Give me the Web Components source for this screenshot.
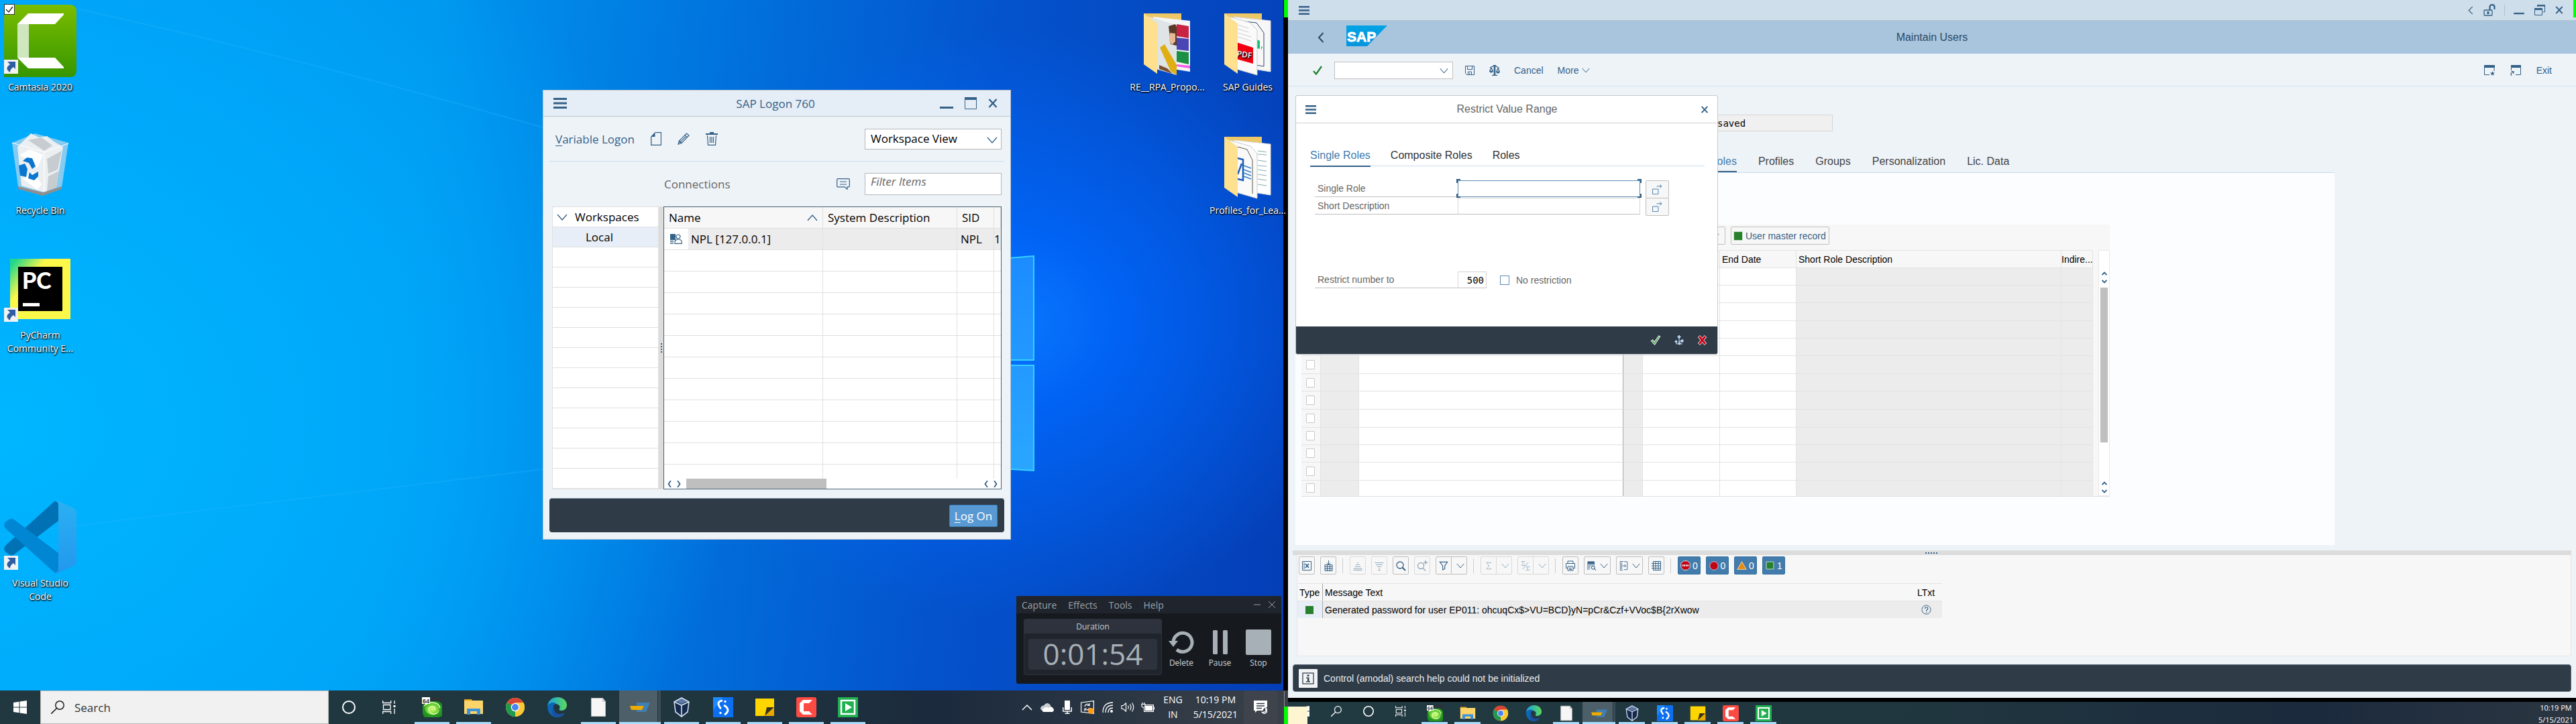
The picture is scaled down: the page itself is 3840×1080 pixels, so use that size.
<!DOCTYPE html>
<html lang="en">
<head>
<meta charset="utf-8">
<title>Desktop</title>
<style>
html,body{margin:0;height:100%}
body{display:flex;background:#000;overflow:hidden;font-family:"Open Sans","Noto Sans",sans-serif}
body>*{flex:1 1 0;min-width:0}
</style>
</head>
<body>
<left-monitor></left-monitor>
<right-monitor></right-monitor>
<script>
const BASE = `
*{box-sizing:border-box}
button,input,select{font:inherit;color:inherit;margin:0;padding:0;border:0;background:none;border-radius:0;outline:0;appearance:none}
button{display:inline-flex;align-items:center;justify-content:center;white-space:nowrap}
ul{list-style:none;margin:0;padding:0}
table{border-collapse:separate;border-spacing:0;table-layout:fixed}
th,td{padding:0;font-weight:400;text-align:left;white-space:nowrap;overflow:hidden}
h1,h2,p{margin:0;font-size:inherit;font-weight:400}
`;
const define = (name, css, html) => customElements.define(name, class extends HTMLElement {
  connectedCallback() {
    if (this.shadowRoot) return;
    this.attachShadow({mode: 'open'}).innerHTML = `<style>${BASE}${css}</style>` + (typeof html === 'function' ? html(this) : html);
  }
});

/* Icon set: [viewBox, markup]. Line icons take the current colour. */
const L = 'fill="none" stroke="currentColor"';
const ICONS = {
  menu: ['0 0 20 16', '<path fill="currentColor" d="M0 0h20v3H0zM0 6.500h20v3H0zM0 13h20v3H0z"/>'],
  min: ['0 0 20 18', '<path fill="currentColor" d="M0 14h20v3H0z"/>'],
  max: ['0 0 20 20', `<path ${L} d="M1.500 1.500h17v17h-17z"/><path fill="currentColor" d="M1 1h18v4H1z"/>`],
  close: ['0 0 14 14', `<path ${L} stroke-width="2.400" d="M1.500 1l11 12M12.500 1l-11 12"/>`],
  restore: ['0 0 16 16', `<path ${L} d="M.5 5.500h11v10H.5zM4.500 3V.8h11v10H13"/><path fill="currentColor" d="M0 5h12v3H0zM4 0h12v2.500H4z"/>`],
  down: ['0 0 16 10', `<path ${L} stroke-width="1.300" d="M1 1l7 8 7-8"/>`],
  up: ['0 0 16 10', `<path ${L} stroke-width="1.300" d="M1 9l7-8 7 8"/>`],
  left: ['0 0 8 14', `<path ${L} stroke-width="1.300" d="M7 1L1 7l6 6"/>`],
  back: ['0 0 10 16', `<path ${L} stroke-width="2" d="M8.500 1L2 8l6.500 7"/>`],
  sleft: ['0 0 6 10', `<path ${L} stroke-width="1.800" d="M5 0L1.500 5 5 10"/>`],
  sright: ['0 0 6 10', `<path ${L} stroke-width="1.800" d="M1 0l3.500 5L1 10"/>`],
  sup: ['0 0 8 6', `<path ${L} stroke-width="1.800" d="M.5 5L4 1.500 7.500 5"/>`],
  sdown: ['0 0 8 6', `<path ${L} stroke-width="1.800" d="M.5 1L4 4.500 7.500 1"/>`],
  doc: ['0 0 16 20', `<path ${L} stroke-width="1.300" d="M6.500.7h9v18.600H.7V7"/><path fill="currentColor" d="M0 7L6.500 0v7z"/>`],
  pencil: ['0 0 18 18', `<path ${L} stroke-width="1.200" d="M1 17l1.500-5L13.500 1l3.500 3L6 15.500zM11 3.500l3.500 3.500M3 15L12 6M2.500 12L6 15.500"/>`],
  trash: ['0 0 18 20', `<path ${L} stroke-width="1.200" d="M2.500 5l1 14.300h11l1-14.300M6.500 7v9M9 7v9M11.500 7v9"/><path fill="currentColor" d="M0 2h18v2H0zM6 0h6v2H6z"/>`],
  note: ['0 0 20 17', `<path ${L} stroke-width="1.200" d="M2 .7h16q1.300 0 1.300 1.300v9.500q0 1.300-1.300 1.300h-2v3.500l-4-3.500H2Q.7 12.800.7 11.500V2Q.7.700 2 .7zM5 5h10M5 9h10"/>`],
  conn: ['0 0 18 15', `<path fill="currentColor" d="M0 0h8v9H0zM0 10h5v1.500H0zM0 13h5v1.500H0z"/><circle ${L} stroke-width="1.200" cx="12" cy="4" r="3" /><path ${L} stroke-width="1.200" d="M7 14.300V11q1.500-3 5-3 4 0 5.300 3v3.300z"/>`],
  check: ['0 0 14 14', '<path fill="none" stroke="#1f8230" stroke-width="2.300" d="M1 8l4 4.500L13 1"/>'],
  save: ['0 0 14 14', `<path ${L} d="M.5.5h13v13h-11l-2-2zM3.500.500v5h7v-5M4.500 13.500v-4.500h5v4.500M6.500 10.500v2"/>`],
  scale: ['0 0 16 16', `<path ${L} stroke-width="1.300" d="M7.300 1v14M8.700 1v14M4 15.300h8M1 4l6-3M9 1l6 4M3 4L.7 9M3 4l2.300 5M13 5l-2.300 5M13 5l2.300 5"/><path fill="currentColor" d="M0 8.500h6q-.5 3-3 3T0 8.500zM10 9.500h6q-.5 3-3 3t-3-3zM6 0h4v2H6z"/>`],
  lock: ['0 0 18 18', `<path ${L} stroke-width="1.300" d="M2 9h10q1 0 1 1v6q0 1-1 1H2q-1 0-1-1v-6q0-1 1-1z"/><path ${L} stroke-width="2.200" d="M9.500 9V4.500q0-3.300 3.500-3.300t3.500 3.300V8"/><path fill="currentColor" d="M5.500 11h3v4h-3z"/>`],
  winstar: ['0 0 16 16', `<path ${L} d="M.5 1v13.500H8M15 1v8"/><path fill="currentColor" d="M0 0h16v4H0zM12.500 9l1 2.500H16l-2 1.700.8 2.600-2.300-1.500-2.300 1.500.8-2.600-2-1.700h2.500z"/>`],
  winlink: ['0 0 16 16', `<path ${L} d="M15.500 1v13.500H8M1.500 4v4"/><path fill="currentColor" d="M1 0h15v4H1z"/><path ${L} stroke-width="1.200" d="M2 16q-3-4 3-6M1.500 9.500L5.200 9.800 4.500 13"/>`],
  multi: ['0 0 16 16', `<path ${L} d="M.5 7.500h9v8h-9zM7 3h8M12 .5L15 3l-3 2.500"/>`],
  ok: ['0 0 16 16', '<path fill="#2a8c35" stroke="#e4f2e4" stroke-width="1.300" d="M1 9l2.500-1.500L6 11l7-10 2 1-8.500 13z"/>'],
  tree: ['0 0 14 15', '<path stroke="#cfe2f5" fill="none" d="M7 4v9M3 8v5h9M7 9h4"/><g fill="#a9d2f6" stroke="#eaf4fd" stroke-width=".5"><path d="M7 0l2.500 2.500L7 5 4.500 2.500zM11.500 6L14 8.500 11.500 11 9 8.500zM2.500 7.500l2 2-2 2-2-2zM7.500 10l2 2-2 2.500-2-2.500z"/></g>'],
  cancel: ['0 0 15 15', '<path fill="none" stroke="#f5dede" stroke-width="4.500" d="M2.500 1.500l10 12M12.500 1.500l-10 12"/><path fill="none" stroke="#c80014" stroke-width="2.800" d="M3 2l9 11M12 2L3 13"/>'],
  xl: ['0 0 16 16', `<path ${L} d="M1.500 1.500h13v13h-13zM4 3v10"/><path ${L} stroke-width="1.600" d="M6 5l5 6M11 5l-5 6"/>`],
  gridin: ['0 0 16 16', `<path ${L} d="M3 6.500h11v9H3zM3 9.500h11M3 12.500h11M6.500 6v9.500M10.500 6v9.500M8.500 0v6M6 3.500L8.500 6 11 3.500"/>`],
  asc: ['0 0 16 16', `<path ${L} d="M7 3.500h2M5 6.500h6M3.500 9.500h9M1.500 12.500h13M1.500 14.500h13"/>`],
  desc: ['0 0 16 16', `<path ${L} d="M1.500 3.500h13M3 6.500h10M5 9.500h6M7 12.500h2M6 14.500h4"/>`],
  find: ['0 0 16 16', `<circle ${L} stroke-width="1.300" cx="7" cy="7" r="5"/><path ${L} stroke-width="2" d="M10.500 10.500L15 15"/>`],
  findp: ['0 0 16 16', `<circle ${L} stroke-width="1.300" cx="6" cy="8" r="4.500"/><path ${L} stroke-width="1.300" d="M9 11l4 4.500M13 0v6M10 3h6"/>`],
  filter: ['0 0 16 16', `<path ${L} stroke-width="1.300" d="M1.500 1.500h13L10 8v5l-3.500 2V8z"/>`],
  sum: ['0 0 16 16', `<path ${L} d="M12 4V2.500H4.500L9 8l-4.500 5.500H12V12"/>`],
  sub: ['0 0 16 16', `<path ${L} d="M7 2V.5H1.500L4.500 4l-3 3.500H7V6M14.500 11V9.500H9.500l2.500 3-2.500 3h5V14M13 2L3 14"/>`],
  print: ['0 0 16 16', `<path ${L} d="M4 4V1h8v3M4 11.500H1.500V4.500h13v7H12M4 9h8v6H4zM6 11.500h4M6 13.500h4"/>`],
  view: ['0 0 16 16', `<path ${L} d="M1 15V1h11v6M2 6.500h9M2 8.500h4M2 11h3M2 13.500h3"/><path fill="currentColor" d="M1 1h11v4H1z"/><circle ${L} stroke-width="1.200" cx="10" cy="11" r="2.700"/><path ${L} stroke-width="1.300" d="M12 13l3 2.500"/>`],
  exp: ['0 0 16 16', `<path ${L} d="M7 .5H1.500v15H6M4 2v12M8 1h5.500v13.500H8M5 8h6M8.500 5.500L11 8l-2.500 2.500"/>`],
  grid: ['0 0 16 16', `<path ${L} d="M3.500 1.500h11v13h-11zM1 4.500h14M1 8h14M1 11.500h14M7 1v14M11 1v14"/>`],
  stop: ['0 0 18 18', '<path fill="#c00418" stroke="#fff" d="M5.500 1h7L17 5.500v7L12.500 17h-7L1 12.500v-7z"/><path stroke="#fff" stroke-width="3" stroke-dasharray="2 1" d="M3.500 9h11.500"/>'],
  ball: ['0 0 18 18', '<circle cx="9" cy="9" r="8" fill="#c00418" stroke="#fff" stroke-width=".8"/>'],
  warn: ['0 0 18 18', '<path fill="#e88a10" stroke="#fbe3c0" d="M9 2l8 14H1z"/>'],
  good: ['0 0 18 18', '<path fill="#27802c" stroke="#d9ecd9" d="M2.500 2.500h13v13h-13z"/>'],
  info: ['0 0 20 20', '<path fill="none" stroke="#4c5b68" stroke-width="1.500" d="M2 2h16v16H2z"/><path fill="#36444f" d="M8.500 4.500h3v2.500h-3zM7 8.500h4.500V14H13v1.500H7V14h2v-4H7z"/>'],
  help: ['0 0 16 16', `<circle ${L} cx="8" cy="8" r="7"/><path ${L} stroke-width="1.300" d="M5.800 6.500q0-2.500 2.300-2.500t2.300 2-2.200 2.800V10M8.200 11.500v1.300"/>`],
  win: ['0 0 20 20', '<path fill="#fff" d="M0 3l8.500-1.200v7.700H0zM9.500 1.600L20 0v9.500H9.500zM0 10.500h8.500v7.700L0 17zM9.500 10.500H20V20L9.500 18.400z"/>'],
  search: ['0 0 20 20', `<circle ${L} stroke-width="1.500" cx="13" cy="7" r="6.200"/><path ${L} stroke-width="1.600" d="M8.500 11.500L0 20"/>`],
  ring: ['0 0 20 20', '<circle fill="none" stroke="#fff" stroke-width="2" cx="10" cy="10" r="9"/>'],
  tasks: ['0 0 20 20', '<path fill="none" stroke="#fff" stroke-width="1.300" d="M.700 0v3.500h12V0M.7 20v-3.500h12V20M1.500 6.500h10.500v7H1.500zM18 0v5M18 12v8"/><path fill="#fff" d="M16.500 7h3v3h-3z"/>'],
  green64: ['0 0 30 30', '<defs><radialGradient id="a"><stop offset="0" stop-color="#d8ff70"/><stop offset=".6" stop-color="#6cd33a"/><stop offset="1" stop-color="#1c8f1c"/></radialGradient></defs><path fill="#2b3338" d="M0 0h30v8H0z"/><path fill="url(#a)" d="M8 6h16l6 4v18l-4 2H4l-3-5V12z"/><path fill="none" stroke="#eaffb8" stroke-width="1.500" d="M3 13q10-8 20-3 7 6 1 13-7 5-13-1-3-7 4-8 6 0 4 5"/><path fill="none" stroke="#1d8a22" stroke-width="1.500" d="M3 17q1 10 13 11 11-1 11-12"/><path fill="#fff" d="M0 0h12v10H0z"/><text x="1" y="9" font-family="Liberation Sans" font-weight="700" font-size="9" fill="#333">64</text>'],
  files: ['0 0 30 30', '<path fill="#e09a15" d="M1 3h11l2 4H1z"/><path fill="#fbd46a" d="M1 5h28v20H1z"/><path fill="#3b92dd" d="M5 26v-9h20v9h-5v-5H10v5z"/>'],
  chrome: ['0 0 30 30', '<circle cx="15" cy="15" r="14" fill="#fcc934"/><path fill="#d94436" d="M15 15L2.900 8A14 14 0 0 1 27.100 8z"/><path fill="#21994f" d="M15 15L2.900 8A14 14 0 0 0 15 29z"/><path fill="#fcc934" d="M15 8h12.100A14 14 0 0 1 15 29l5-10z"/><circle cx="15" cy="15" r="6.300" fill="#fff"/><circle cx="15" cy="15" r="5" fill="#4a86f0"/>'],
  edge: ['0 0 30 30', '<defs><linearGradient id="e" x2="1"><stop offset="0" stop-color="#1c9ee0"/><stop offset="1" stop-color="#5adb5a"/></linearGradient></defs><path fill="url(#e)" d="M1 14C2 5 8 0 16 0c9 0 14 6 14 12 0 5-4 8-8 8-3 0-4-1-3-3 2-3-1-7-6-7-6 0-10 2-12 4z"/><path fill="#0d66b8" d="M1 13c3-5 9-6 13-4-5 2-7 13 1 17 4 2 8 1 12-2-6 8-17 8-23 0-2-3-3-7-3-11z"/><path fill="#1b4fa0" d="M11 16c-1 8 8 12 16 7-4 6-10 7-14 6-6-2-6-9-2-13z"/>'],
  page: ['0 0 30 30', '<path fill="#f6f6f6" stroke="#bbb" d="M4.500 1.500h17l4 5v22h-21z"/><path fill="#ccc" d="M21 1v6h5z"/>'],
  saplogon: ['0 0 30 30', '<path fill="#3f7fb3" d="M10 8h20l-6 14H9l2-4h8l2-5h-11z"/><path fill="#f0ab00" d="M0 13h21l-3 6H2z"/>'],
  vbox: ['0 0 30 30', '<path fill="#14294b" d="M15 0l12 6-2 17-10 7-10-7L3 6z"/><path fill="#5d7ba6" d="M15 1l9 5-9 4-9-4z"/><path fill="none" stroke="#d4e0f0" stroke-width="1.600" d="M4 7l11 5 11-5M15 12v17M15 1l11 6-2 15-9 7-9-7L4 7z"/>'],
  snagit: ['0 0 30 30', '<path fill="#0c6ff0" d="M0 0h30v30H0z"/><path fill="#1b8cff" d="M0 0h14L0 20z"/><path fill="none" stroke="#fff" stroke-width="3" d="M14 5q-7 1-6 6 2 5 4 6M16 12q6 3 6 8-1 4-5 6M18 5v3M11 22v3"/>'],
  sticky: ['0 0 30 30', '<path fill="#ffd500" d="M1 2h28v26H1z"/><path fill="#37321c" d="M15 28l3-13h11z"/><path fill="#e8a800" d="M15 28l14-13v13z"/>'],
  camrec: ['0 0 30 30', '<rect width="30" height="30" rx="3" fill="#fd4a42"/><path fill="#fff" d="M10 4h14l-5 5h-8v12h8l5 5H10l-5-5V9z"/>'],
  play: ['0 0 30 30', '<path fill="#1fb050" d="M0 0h30v30H0z"/><path fill="none" stroke="#fff" stroke-width="2.500" d="M5 5h20v20H5z"/><path fill="#fff" d="M11 9l10 6-10 6z"/>'],
  cloud: ['0 0 20 13', '<path fill="#c9cfd4" d="M3 11q-4-1-2.500-5Q2 3 5 3.500 7 0 10.500 0 15 1 15.500 5L6 11z"/><path fill="#fff" d="M4 13q-3-3 1-5.500Q9 5 12 7q3-3 6-.5 4 4 0 6.500z"/>'],
  mic: ['0 0 14 20', '<path fill="#fff" d="M3 0h8v14H3z"/><path fill="none" stroke="#fff" stroke-width="1.500" d="M.7 10v6h12.600v-6M7 16v3M3.500 19.300h7"/>'],
  upd: ['0 0 20 20', '<path fill="none" stroke="#fff" stroke-width="1.200" d="M.600 3L19.400.600v18.800L.6 17zM6 9q1-4 5-3.500l2 1.500M13 4v3.500h-3.500M13 11q-1 3-4 3-2 0-3-1.500M6 16v-4h3"/><circle cx="15.500" cy="15.500" r="4.500" fill="#ff9c1a"/>'],
  wifi: ['0 0 16 16', '<path fill="none" stroke="#fff" stroke-width="1.300" d="M1 16Q1 1 16 1M5 16Q5 5 16 5M9 16q0-7 7-7"/><circle cx="14" cy="14" r="2" fill="#fff"/>'],
  sound: ['0 0 20 14', '<path fill="none" stroke="#fff" stroke-width="1.200" d="M1 4.500h2.500L7.500.800v12.400L3.500 9.500H1zM10.500 4.500q1.500 2.500 0 5M13.500 2.500q3 4.500 0 9M16.500.500q4.500 6.500 0 13"/>'],
  batt: ['0 0 20 14', '<path fill="#fff" d="M6 5h11v7H6z"/><path fill="none" stroke="#fff" stroke-width="1.200" d="M6 3.600h12.400v9.800H4.600V8M1 2.500h5v3q-1 2-2.500 2T1 5.500zM2 0v2.500M5 0v2.500M19.500 6.500v4"/>'],
  notif: ['0 0 20 20', '<path fill="#fff" d="M0 0h20v10q-5 0-6.500 5H5l-3 3v-3H0z"/><path stroke="#2c3746" stroke-width="1.500" d="M4 4.500h12M4 8h12M4 11.500h8"/><path fill="none" stroke="#fff" stroke-width="1.500" d="M17.500 11q2.500 7-5 6.500 3 3.500 6.500 0 2-4-1.500-6.500z"/>'],
  undo: ['0 0 38 34', '<path fill="none" stroke="#a7b0b6" stroke-width="5" d="M7 17A14 14 0 1 1 12 28"/><path fill="#a7b0b6" d="M0 15h14l-7 9z"/>'],
  pause: ['0 0 22 36', '<rect width="7" height="36" rx="1.500" fill="#a7b0b6"/><rect x="15" width="7" height="36" rx="1.500" fill="#a7b0b6"/>'],
  halt: ['0 0 38 38', '<rect width="38" height="38" rx="2" fill="#a7b0b6"/>'],
  link: ['0 0 21 21', '<rect width="21" height="21" fill="#f2f2f2"/><path fill="#2f5da3" d="M5 3h12v11l-3-3q-5 3-5 8-9-6 0-12z"/>'],
  camtasia: ['0 0 108 108', '<defs><linearGradient id="c" x2="0" y2="1"><stop offset="0" stop-color="#7bbd00"/><stop offset="1" stop-color="#369600"/></linearGradient></defs><path fill="url(#c)" d="M0 0h98q10 0 10 10v88q0 10-10 10H0z"/><path fill="#d0e6bf" d="M20 29h17v50H20z"/><path fill="#fff" d="M36 13h53v2L76 29H20zM20 79h56l13 14v2H36z"/>'],
  bin: ['0 0 84 96', '<path fill="#9ed0ee" fill-opacity=".85" d="M0 16L34 2l50 14-10 67-28 10-37-12z"/><path fill="#eceff1" d="M8 22L22 8 28 2l12 6 12-2 10 8 14 8-10 60-18 8-34-10z"/><path fill="#c6ccd0" d="M24 12l20-4 16 12-12 8zM52 40l22-12-6 28-14 6zM54 66l16-8-4 24-14 6z"/><path fill="#fff" d="M12 34l14-8 20 8-8 20zM16 70l16-10 12 18-6 8z"/><path fill="none" stroke="#fff" d="M0 16l48 14 36-13M48 30v63"/><path fill="#8f8f90" d="M9 81l37 9 28-9v4l-28 10-37-10z"/><path fill="#0a76d0" d="M16 43l6-5 8 1 5 12-5 4-5-9zM10 50l9-3 4 8-2 12-9-2zM26 60l4 4 9-5v7l-6 6-9-3z"/>'],
  pycharm: ['0 0 90 90', '<defs><linearGradient id="p" x2=".6" y2=".5"><stop offset=".1" stop-color="#21d789"/><stop offset=".6" stop-color="#fcf84a"/></linearGradient></defs><path fill="url(#p)" d="M0 0h90v90H0z"/><path fill="#000" d="M12 12h66v66H12z"/><text x="18" y="45" font-family="Lato" font-weight="900" font-size="34" fill="#fff">PC</text><path fill="#fff" d="M19 66h25v5H19z"/>'],
  vscode: ['0 0 108 108', '<defs><linearGradient id="v" x2="0" y2="1"><stop offset="0" stop-color="#2bb0f2"/><stop offset="1" stop-color="#2298ee"/></linearGradient></defs><path fill="#0071b4" d="M0 72q0-3 3-6L74 2q3-3 7 0v28L15 80q-4 3-8 0L2 76q-2-2-2-4z"/><path fill="#0086d3" d="M0 36q0 3 3 6l71 64q3 3 7 0V78L15 28q-4-3-8 0l-5 4q-2 2-2 4z"/><path fill="url(#v)" d="M76 1q3-2 6 0l22 10q4 2 4 6v74q0 4-4 6l-22 10q-3 2-6 0 5 0 5-5V6q0-5-5-5z"/>'],
  folderA: ['0 -13 70 109', '<path fill="#eec766" d="M0 1h56v60H0z"/><path fill="#f4f5f6" d="M14 6l55 6v76l-50-8z"/><path fill="#c92343" d="M49 17l18 3v18l-18-3z"/><path fill="#4a45b5" d="M49 37l18 2v18l-18-2z"/><path fill="#1b8f43" d="M49 57l18 2v18l-18-4z"/><path fill="#f65be8" d="M49 77l20 2v4l-20-3z"/><path fill="#dfe4e6" d="M8 6l36 11 5 2v74l-31-9z"/><path fill="#5b3a28" d="M37 20l10-3 2 4v28l-9-2z"/><path fill="#e8b890" d="M39 30l8 1v12l-5 5-4-6z"/><path fill="#dfae12" d="M24 52l7-5 18 31v15l-9-6z"/><path fill="#7a5030" d="M23 78l12 5 8 8-20-7z"/><path fill="#ffe08f" d="M0 1l20 15v75L0 77z"/>'],
  folderB: ['0 -13 70 109', '<path fill="#eec766" d="M0 1h56v60H0z"/><path fill="#f7f7f8" stroke="#d9d9d9" d="M14 6l55 6v76l-50-8z"/><path fill="none" stroke="#334a6b" d="M30 13l18 2 11 15v50l-12-2"/><path fill="#19bd77" d="M49 40l4 2v12l-4-1zM55 50l2 1-2 5z"/><path fill="#fafafa" stroke="#ccc" d="M8 6l31 9 10 11v67l-31-9z"/><path stroke="#cfcfcf" d="M20 18l16 5M20 24l16 5M20 30l20 6M20 36l20 6"/><path fill="#f00010" d="M18 44l25 8v24l-25-7z"/><text x="19" y="65" transform="rotate(8 18 60)" font-family="Open Sans" font-weight="600" font-size="12" fill="#fff">PDF</text><path fill="#ffe08f" d="M0 1l20 15v75L0 77z"/>'],
  folderC: ['0 -13 70 109', '<path fill="#eec766" d="M0 1h56v60H0z"/><path fill="#fff" stroke="#d9d9d9" d="M14 6l55 6v76l-50-8z"/><path stroke="#8aa" d="M50 22l13 2M50 27l13 1M50 36l13 2M50 44l13 1M50 50l13 2M50 57l13 2M50 64l13 2M50 72l13 2"/><path fill="#fafafa" stroke="#ccc" d="M8 6l31 9 10 11v67l-31-9z"/><path fill="none" stroke="#5a5a4a" d="M20 16l14 4 8 16v50"/><path fill="none" stroke="#1d5cb8" stroke-width="2.500" d="M20 33l8 2v31l-8-2M20 57l6-16"/><path stroke="#2f7fd0" stroke-width="1.500" d="M29 44l11 4M29 50l11 4M29 55l11 4M29 60l11 4"/><path fill="#ffe08f" d="M0 1l20 15v75L0 77z"/>'],
};
define('ui-icon', ':host{display:inline-flex;flex:none}svg{display:block}', el => {
  const [box, body] = ICONS[el.getAttribute('name')], [, , w, h] = box.split(' ');
  return `<svg viewBox="${box}" width="${el.getAttribute('w') || w}" height="${el.getAttribute('h') || h}" aria-hidden="true">${body}</svg>`;
});
const ic = (n, w, h) => `<ui-icon name="${n}"${w ? ` w="${w}" h="${h || w}"` : ''}></ui-icon>`;

define('desk-item', `
:host{display:flex;flex-direction:column;align-items:center;width:120px;font-size:14px;line-height:20px;color:#fff;text-align:center;text-shadow:0 1px 2px #000,1px 1px 2px #000}
.pic{position:relative;height:109px;display:flex;align-items:center}
.arrow{position:absolute;left:var(--arrow,0);bottom:0}
.tick{position:absolute;left:0;top:0;width:16px;height:16px;margin:0;border:1px solid #333;background:#fff;appearance:none}
.tick+svg{position:absolute;left:2px;top:3px}
.label{white-space:pre-line;margin-top:5px}`,
  el => `<div class="pic">${ic(el.getAttribute('icon'))}${el.hasAttribute('tick') ? '<input type="checkbox" class="tick" checked aria-label="Select"><svg width="12" height="10"><path d="M1 5l4 4 6-8" fill="none" stroke="#333" stroke-width="1.500"/></svg>' : ''}${el.hasAttribute('link') ? `<span class="arrow">${ic('link')}</span>` : ''}</div><div class="label"><slot></slot></div>`);

/* Taskbar application buttons */
const APPS = [['green64', 1], ['files', 1], ['chrome'], ['edge'], ['page', 1], ['saplogon', 2], ['vbox', 1], ['snagit', 1], ['sticky', 1], ['camrec', 1], ['play', 1]];
define('task-apps', `
:host{display:flex;align-items:stretch}
button{width:var(--cell,62px);position:relative}
.on:after{content:"";position:absolute;bottom:0;left:5px;right:5px;height:3px;background:#a9ddfb}
.act{background:linear-gradient(90deg,#4d6069 92%,#22343d 92%,#22343d 94%,#3b4d56 94%)}
.act:after{left:0;right:0}`,
  el => APPS.map(([n, s]) => `<button class="${s ? 'on' : ''} ${s === 2 ? 'act' : ''}" aria-label="${n}">${ic(n, el.getAttribute('size') || 30)}</button>`).join(''));

define('task-bar', `
:host{display:flex;height:50px;background:linear-gradient(90deg,#213840 0,#20363f 55%,#1b2a3d 73%,#2f3945 90%,#3a4048);color:#fff;font-size:14px;line-height:22px}
.start{width:60px}
.search{display:flex;align-items:center;gap:15px;width:430px;padding:0 15px;background:#f1f1f1;border:1px solid #b9b9b9;color:#222;font-size:17px}
.search input{width:300px;height:40px}
.search input::placeholder{color:#333;opacity:1}
.sys button{width:60px}
.sys{display:flex;margin-right:3px}
.tray{display:flex;align-items:center;margin-left:auto}
.tray .i{display:flex;justify-content:center;width:30px}
.txt{text-align:center}
.lang{margin:0 16px 0 8px}
.notif{width:50px;height:50px;margin-left:9px;background:#3e434c}
.end{width:6px;border-left:1px solid #8a8d92;height:50px;margin-left:10px}`,
  `<button class="start" aria-label="Start">${ic('win')}</button>
<label class="search">${ic('search')}<input type="text" placeholder="Search" aria-label="Search"></label>
<div class="sys"><button aria-label="Cortana">${ic('ring')}</button><button aria-label="Task View">${ic('tasks')}</button></div>
<task-apps></task-apps>
<div class="tray"><span class="i"><svg width="16" height="10"><path d="M1 9l7-7 7 7" fill="none" stroke="#fff" stroke-width="1.500"/></svg></span><span class="i">${ic('cloud')}</span><span class="i">${ic('mic')}</span><span class="i">${ic('upd')}</span><span class="i">${ic('wifi')}</span><span class="i">${ic('sound')}</span><span class="i">${ic('batt')}</span>
<div class="txt lang">ENG<br>IN</div><div class="txt">10:19 PM<br>5/15/2021</div>
<button class="notif" aria-label="Notifications">${ic('notif')}</button><span class="end"></span></div>`);

define('sap-logon', `
:host{display:flex;flex-direction:column;width:698px;height:671px;background:#eef3f8;border:1px solid #b9c3cb;font-size:17px;color:#000}
.title{display:grid;grid-template-columns:1fr auto 1fr;align-items:center;height:39px;padding:0 19px 0 15px;background:#e5edf6;border-bottom:1px solid #bfc8d0;color:#346187}
.title button{justify-self:start}
.title div{display:flex;gap:16px;justify-content:flex-end;align-items:center}
.tools{display:flex;align-items:center;height:67px;margin:0 9px;padding:0 4px 0 9px;border-bottom:1px solid #c9dcee;color:#346187}
.tools button{margin-right:24px}
u{text-underline-offset:3px}
.combo{position:relative;margin-left:auto;width:204px;height:31px;border:1px solid #b5b8ba;background:#fff;color:#000}
.combo select{width:100%;height:100%;padding:0 8px 2px}
.combo ui-icon{position:absolute;right:5px;top:11px;color:#346187;pointer-events:none}
.conn{display:flex;align-items:center;height:67px;padding:0 13px 0 180px;color:#666}
.conn ui-icon{margin:0 22px 0 auto;color:#346187}
.conn input{width:204px;height:33px;border:1px solid #b5b8ba;background:#fff;padding:0 8px 8px;font-style:italic}
.conn input::placeholder{color:#666;opacity:1}
.panes{display:flex;height:422px;margin:0 13px}
.tree{width:159px;border:1px solid #e0e0e0;background:repeating-linear-gradient(#fff 0 29px,#e0e0e0 29px 30px)}
.tree li{height:30px;display:flex;align-items:center;gap:11px;padding-left:6px;border-bottom:1px solid #e0e0e0}
.tree ui-icon{color:#346187}
.tree li+li{background:#e7eef7;padding-left:49px}
.split{width:7px;background:#dcdcdc;display:flex;align-items:center;justify-content:center}
.split i{width:2px;height:14px;background:repeating-linear-gradient(#346187 0 2px,transparent 2px 4px)}
.grid{flex:1;min-width:0;border:1px solid #4b6372;background:#fff;display:flex;flex-direction:column}
.rows{flex:1;min-height:0;overflow:hidden}
table{width:100%}
tr{height:32px}
th,td{border-right:1px solid #e0e0e0;border-bottom:1px solid #e0e0e0;padding-left:7px;height:32px}
th{background:#f7f7f7}
th span{display:flex;align-items:center;justify-content:space-between;padding-right:7px}
th ui-icon{color:#346187}
.sel td{background:#ececec;padding-left:5px}
.sel td:first-child{padding:0}
tr td:last-child,.sel td:last-child{border-right:0;padding:0;overflow:visible}
.sel div{display:flex;align-items:center;height:31px}
.sel b{display:flex;align-items:center;justify-content:center;width:36px;height:31px;margin-right:4px;background:#fff;color:#346187}
.bar{display:flex;align-items:center;gap:8px;height:15px;padding:0 5px;color:#346187}
.bar i{width:209px;height:15px;background:#bfbfbf;margin-right:auto}
.foot{display:flex;align-items:center;justify-content:flex-end;height:51px;margin:13px 9px 0;padding-right:10px;border-radius:4px;border-top:1px solid #72879a;background:#2f3b47}
.foot button{width:72px;height:33px;border:1px solid #3d82bd;border-radius:2px;background:#5899d3;color:#fff}`,
  `<div class="title"><button aria-label="Menu">${ic('menu')}</button><h1>SAP Logon 760</h1><div>${ic('min')}${ic('max')}${ic('close')}</div></div>
<div class="tools"><button><span><u>V</u>ariable Logon</span></button><button aria-label="New">${ic('doc')}</button><button aria-label="Edit">${ic('pencil')}</button><button aria-label="Delete">${ic('trash')}</button><div class="combo"><select aria-label="View"><option>Workspace View</option></select>${ic('down')}</div></div>
<div class="conn"><span>Connections</span>${ic('note')}<input type="text" placeholder="Filter Items" aria-label="Filter Items"></div>
<div class="panes"><ul class="tree"><li>${ic('down')}Workspaces</li><li>Local</li></ul><div class="split"><i></i></div>
<div class="grid"><div class="rows"><table><colgroup><col style="width:237px"><col style="width:200px"><col style="width:55px"><col></colgroup>
<thead><tr><th><span>Name${ic('up')}</span></th><th>System Description</th><th>SID</th><th></th></tr></thead>
<tbody><tr class="sel"><td><div><b>${ic('conn')}</b>NPL [127.0.0.1]</div></td><td></td><td>NPL</td><td>1</td></tr>${'<tr><td></td><td></td><td></td><td></td></tr>'.repeat(11)}</tbody></table></div>
<div class="bar">${ic('sleft')}${ic('sright')}<i></i>${ic('sleft')}${ic('sright')}</div></div></div>
<div class="foot"><button><span><u>L</u>og On</span></button></div>`);

define('capture-panel', `
:host{display:flex;flex-direction:column;width:395px;height:131px;border-radius:3px;background:#161a1f;color:#b5bcc2;font-size:14px}
.menu{display:flex;align-items:center;gap:17px;height:26px;padding:0 8px;background:#20242c;border-radius:3px 3px 0 0;color:#9aa2a9}
.menu svg{margin-left:auto}
.body{display:flex;padding:8px 11px 0}
.dur{width:206px;height:84px;border:1px solid #2d323c;border-radius:3px;background:#20242c}
.dur h2{height:21px;line-height:22px;text-align:center;background:#2d323c;font-size:12px;color:#c5cad0}
.dur p{height:46px;margin:8px 6px 0;border-radius:3px;background:#2d323c;color:#a7b0b6;font-size:44px;line-height:44px;text-align:center}
.acts{flex:1;display:flex;justify-content:space-between;padding:16px 4px 0 10px}
.acts button{flex-direction:column;justify-content:flex-start;width:38px;font-size:12px;line-height:18px;color:#d3d6d9}
.acts ui-icon{height:38px;align-items:center;margin-bottom:3px}`,
  `<div class="menu"><span>Capture</span><span>Effects</span><span>Tools</span><span>Help</span><svg width="34" height="12"><path d="M1 6h10M23 1l10 10M33 1L23 11" fill="none" stroke="#9aa2a9"/></svg></div>
<div class="body"><div class="dur"><h2>Duration</h2><p>0:01:54</p></div><div class="acts"><button>${ic('undo')}Delete</button><button>${ic('pause')}Pause</button><button>${ic('halt')}Stop</button></div></div>`);

define('left-monitor', `
:host{display:flex;flex-direction:column;position:relative;background:#000}
.desk{flex:1;position:relative;margin-right:7px;
background:radial-gradient(ellipse 560px 440px at 1500px 480px,#0a78ff 0,rgba(0,104,255,.8) 30%,rgba(0,80,220,0) 100%),
radial-gradient(ellipse 1100px 900px at 0 640px,#00b6ff 0,rgba(0,176,255,.6) 60%,rgba(0,160,245,0) 100%),
linear-gradient(97deg,#009ef5 0,#0096ee 32%,#0078e0 50%,#0452cc 74%,#043eb6 100%)}
.desk>svg{position:absolute;left:0;top:0;width:100%;height:100%}
.desk>*{position:absolute}
task-bar{z-index:1}
.g{position:absolute;right:0;width:6px;height:26px;background:#0f0;z-index:2}`,
  `<div class="desk">
<svg viewBox="0 0 1913 1030" preserveAspectRatio="none"><defs><linearGradient id="w" x2="0" y2="1"><stop offset="0" stop-color="#1c8cff"/><stop offset="1" stop-color="#2aa6ff"/></linearGradient></defs><g fill="none" stroke="#29b6ff" stroke-width="2" stroke-opacity=".3"><path d="M110 12Q420 80 809 190M0 798L809 700"/></g>
<g fill="url(#w)" stroke="#35d0ff" stroke-width="2"><path d="M1340 398l201-16v155h-201zM1340 545h201v157l-201-12z"/></g></svg>
<desk-item icon="camtasia" link tick style="left:0;top:6px">Camtasia 2020</desk-item>
<desk-item icon="bin" style="left:0;top:190px">Recycle Bin</desk-item>
<desk-item icon="pycharm" link style="left:0;top:376px;--arrow:-9px">PyCharm
Community E...</desk-item>
<desk-item icon="vscode" link style="left:0;top:746px">Visual Studio
Code</desk-item>
<desk-item icon="folderA" style="left:1680px;top:6px">RE__RPA_Propo...</desk-item>
<desk-item icon="folderB" style="left:1800px;top:6px">SAP Guides</desk-item>
<desk-item icon="folderC" style="left:1800px;top:190px">Profiles_for_Lea...</desk-item>
<sap-logon style="left:809px;top:134px"></sap-logon>
<capture-panel style="left:1515px;top:889px"></capture-panel></div>
<task-bar></task-bar><span class="g" style="top:0"></span><span class="g" style="bottom:0"></span>`);

define('range-dialog', `
:host{display:flex;flex-direction:column;width:630px;height:387px;border:1px solid #c3c9ce;border-radius:3px;background:#fff;font-size:14px;color:#666;overflow:hidden}
.title{display:grid;grid-template-columns:1fr auto 1fr;align-items:center;height:41px;padding:0 13px 0 14px;border-bottom:1px solid #d2d2d2;font-size:16px}
.title button{color:#346187;justify-self:start}
.title button:last-child{justify-self:end}
.tabs{display:flex;gap:30px;margin:33px 19px 0 21px;height:31px;border-bottom:1px solid #c9dcee;font-size:16px;color:#333}
.tabs button{height:32px;align-items:center;border-bottom:2px solid transparent}
.tabs button:first-child{color:#427cac;border-color:#346187}
form{margin:0;padding:21px 0 0 28px}
.row{display:flex;align-items:flex-start;height:26px}
.row label.l{width:213px;height:25px;line-height:25px;padding-left:4px;border-bottom:1px solid #bfbfbf}
.row input[type=text]{width:272px;height:25px;border:1px solid #d5d5d5;border-bottom-color:#bfbfbf;background:#fff}
.box{position:relative;margin-right:8px}
.focus input[type=text]{border-color:#5d8db5}
.focus:after{content:"";position:absolute;inset:-2px;bottom:-1px;background:linear-gradient(#346187,#346187) 0 0/6px 2px,linear-gradient(#346187,#346187) 0 0/2px 6px,linear-gradient(#346187,#346187) 100% 0/6px 2px,linear-gradient(#346187,#346187) 100% 0/2px 6px,linear-gradient(#346187,#346187) 0 100%/6px 2px,linear-gradient(#346187,#346187) 0 100%/2px 6px,linear-gradient(#346187,#346187) 100% 100%/6px 2px,linear-gradient(#346187,#346187) 100% 100%/2px 6px;background-repeat:no-repeat;pointer-events:none}
.row button{width:35px;height:27px;border:1px solid #bfbfbf;border-radius:2px;background:#f7f7f7;color:#427cac}
.limit{margin-top:84px}
.limit .box input{width:43px;padding-right:3px;text-align:right;font:14px "DejaVu Sans Mono",monospace;color:#000}
.limit .c{display:flex;align-items:center;gap:10px;height:25px;margin-left:12px}
.c input{width:14px;height:14px;border:1px solid #5d8db5;background:#fff}
.foot{display:flex;align-items:center;justify-content:flex-end;gap:20px;height:41px;margin-top:auto;padding-right:15px;background:#2f3b47}`,
  `<div class="title"><button aria-label="Menu">${ic('menu', 16, 13)}</button><h2>Restrict Value Range</h2><button aria-label="Close">${ic('close', 12, 11)}</button></div>
<div class="tabs"><button>Single Roles</button><button>Composite Roles</button><button>Roles</button></div>
<form><div class="row"><label class="l" for="a">Single Role</label><span class="box focus"><input id="a" type="text"></span><button type="button" aria-label="Multiple selection">${ic('multi', 15)}</button></div>
<div class="row"><label class="l" for="b">Short Description</label><span class="box"><input id="b" type="text"></span><button type="button" aria-label="Multiple selection">${ic('multi', 15)}</button></div>
<div class="row limit"><label class="l" for="n">Restrict number to</label><span class="box"><input id="n" type="text" value="500"></span><label class="c"><input type="checkbox">No restriction</label></div></form>
<div class="foot"><button aria-label="OK">${ic('ok', 16, 15)}</button><button aria-label="Hierarchy">${ic('tree')}</button><button aria-label="Cancel">${ic('cancel')}</button></div>`);

define('role-grid', `
:host{display:block;width:1205px;font-size:14px;color:#000;background:#f7f7f7;border-bottom:1px solid #e0e0e0}
.tools{display:flex;gap:8px;height:38px;padding:3px 0 0 588px;color:#346187}
.tools button{height:27px;border:1px solid #bfbfbf;border-radius:2px;gap:5px;background:#f7f7f7;padding:0 4px}
.tools button:first-child{width:44px;padding-left:18px}
.tools i{width:12px;height:12px;background:#27802c;outline:1px solid #cfe3cf}
.wrap{display:flex;height:367px}
table{width:1180px;height:367px;background:#fff}
td,th{border-top:1px solid #e3e3e3;border-right:1px solid #e3e3e3;padding-left:3px}
tr{height:26px}
tbody tr:nth-child(3n){height:27px}
tbody tr:last-child{height:24px}
th{background:#f7f7f7}
th:last-child{padding:0;overflow:visible}
td:first-child{background:#f7f7f7;padding:0 0 0 7px}
td:nth-child(2),td:nth-child(4),td:nth-child(7),td:nth-child(8){background:#ececec}
td:nth-child(3){border-right:1px solid #a8a8a8}
td input{display:block;width:13px;height:14px;border:1px solid #c9c9c9;border-radius:1px;background:#fff}
.sb{display:flex;flex-direction:column;align-items:center;width:17px;margin-left:auto;background:#fff;border:1px solid #e8e8e8;color:#346187;padding:31px 0 3px;gap:6px}
.sb i{width:11px;height:231px;background:#bfbfbf;margin-bottom:auto}`,
  `<div class="tools"><button aria-label="Menu">${ic('down', 12, 8)}</button><button><i></i>User master record</button></div>
<div class="wrap"><table><colgroup><col style="width:29px"><col style="width:57px"><col style="width:394px"><col style="width:29px"><col style="width:115px"><col style="width:114px"><col style="width:395px"><col></colgroup>
<thead><tr><th></th><th></th><th></th><th></th><th></th><th>End Date</th><th>Short Role Description</th><th>Indire...</th></tr></thead>
<tbody>${`<tr><td><input type="checkbox" aria-label="Select row"></td>${'<td></td>'.repeat(7)}</tr>`.repeat(13)}</tbody></table>
<div class="sb">${ic('sup')}${ic('sdown')}<i></i>${ic('sup')}${ic('sdown')}</div></div>`);

define('message-log', `
:host{display:flex;flex-direction:column;height:151px;background:#f7f7f7;border:1px solid #e6e6e6;border-top:0;font-size:14px;color:#000}
.tools{display:flex;gap:8px;height:42px;padding:2px 0 0 2px;color:#346187}
.tools button{min-width:24px;height:27px;border:1px solid #bfbfbf;border-radius:2px;background:#f7f7f7;padding:0 3px}
.tools .d{gap:5px;width:40px}
.tools .s{width:47px;gap:12px;background:linear-gradient(90deg,transparent 22px,#bfbfbf 22px,#bfbfbf 23px,transparent 23px)}
.tools hr{width:1px;height:22px;margin:3px 2px 3px 1px;border:0;background:#cfcfcf}
.off{opacity:.5}
.tools .n{width:34px;gap:3px;border-color:#346f9f;background:#427cac;color:#fff}
table{width:961px}
tr{height:26px}
th,td{border-top:1px solid #e3e3e3;padding-left:3px;height:26px}
th:first-child,td:first-child{border-right:1px solid #a8a8a8;width:38px}
tr>:last-child{width:40px}
td{background:#ececec}
td:first-child{background:#e7eef7;padding-left:12px}
td i{display:block;width:12px;height:12px;background:#27802c}
td ui-icon{display:block;margin-left:6px;color:#346187}`,
  `<div class="tools"><button aria-label="Excel">${ic('xl')}</button><button aria-label="Layout">${ic('gridin')}</button><hr><button class="off" aria-label="Sort ascending">${ic('asc')}</button><button class="off" aria-label="Sort descending">${ic('desc')}</button><button aria-label="Find">${ic('find')}</button><button class="off" aria-label="Find next">${ic('findp')}</button><button class="s" aria-label="Filter">${ic('filter', 14)}${ic('down', 12, 8)}</button><hr><button class="s off" aria-label="Total">${ic('sum', 14)}${ic('down', 12, 8)}</button><button class="s off" aria-label="Subtotal">${ic('sub', 14)}${ic('down', 12, 8)}</button><hr><button aria-label="Print">${ic('print')}</button><button class="d" aria-label="Views">${ic('view', 14)}${ic('down', 12, 8)}</button><button class="d" aria-label="Export">${ic('exp', 14)}${ic('down', 12, 8)}</button><button aria-label="Columns">${ic('grid')}</button><hr><button class="n">${ic('stop', 15)}0</button><button class="n">${ic('ball', 14)}0</button><button class="n">${ic('warn', 15)}0</button><button class="n">${ic('good', 15)}1</button></div>
<table><thead><tr><th>Type</th><th>Message Text</th><th>LTxt</th></tr></thead><tbody><tr><td><i></i></td><td>Generated password for user EP011: ohcuqCx$&gt;VU=BCD}yN=pCr&amp;Czf+VVoc$B{2rXwow</td><td>${ic('help', 15)}</td></tr></tbody></table>`);

define('sap-gui', `
:host{display:flex;flex-direction:column;position:relative;flex:1;min-height:0;background:#eef3f8;color:#346187;font:14px "Liberation Sans",Arial,sans-serif}
.cap{display:flex;align-items:center;height:31px;padding:0 19px 0 16px;background:#cfdeeb;border-bottom:1px solid #b3c0cb}
.cap div{display:flex;align-items:center;gap:15px;margin-left:auto}
.cap hr{width:1px;height:16px;margin:0 -2px;border:0;background:#aebfce}
.head{display:grid;grid-template-columns:1fr auto 1fr;align-items:center;height:49px;padding:0 44px;background:#a9c5de;font-size:16px;color:#2d4a63}
.head div{display:flex;align-items:center;gap:33px}
.head svg{display:block;margin-bottom:5px}
.tools{display:flex;align-items:center;height:49px;padding:0 36px 0 37px;border-top:1px solid #e6f0f8;border-bottom:1px solid #d3e3f2}
.tools button{margin-right:21px}
.tools .q{width:16px}
.tools .m{gap:4px}
.combo{position:relative;margin:0 17px 0 -3px;width:177px;height:26px;border:1px solid #bfbfbf;background:#fff}
.combo input{width:100%;height:100%}
.combo ui-icon{position:absolute;right:6px;top:8px}
.tools .r{display:flex;align-items:center;margin-left:auto}
.tools .r button{margin:0 0 0 23px}
.field{margin:42px 0 0 580px;width:232px;height:25px;border:1px solid #d5d5d5;background:#f0f0f0;padding-left:59px;font:14px "DejaVu Sans Mono",monospace;color:#000;flex:none}
.tabs{display:flex;gap:32px;height:62px;width:1549px;margin-left:11px;padding-left:617px;border-bottom:1px solid #c9dcee;font-size:16px;color:#444;align-items:flex-end;flex:none}
.tabs button{height:30px;border-bottom:2px solid transparent}
.tabs button:first-child{color:#427cac;border-color:#346187}
.panel{flex:1;min-height:0;width:1549px;margin-left:11px;padding:77px 0 0 9px;background:#fcfdff}
.split{height:7px;margin:8px 7px 0;background:#dcdcdc;display:flex;align-items:center;justify-content:center;flex:none}
.split i{width:20px;height:2px;background:repeating-linear-gradient(90deg,#346187 0 2px,transparent 2px 4px)}
message-log{margin:0 7px 0 13px;flex:none}
.status{display:flex;align-items:center;gap:9px;height:41px;margin:12px 7px 9px;padding-left:8px;border:1px solid #64727f;border-radius:4px;background:#2f3b47;color:#e9edf0;flex:none}
.status span{display:flex;align-items:center;justify-content:center;width:28px;height:28px;background:#f2f4f6;border-radius:1px}
range-dialog{position:absolute;left:11px;top:142px}`,
  `<div class="cap"><button aria-label="Menu">${ic('menu', 16, 13)}</button><div>${ic('left', 8, 13)}${ic('lock')}<hr>${ic('min', 16, 14)}${ic('restore')}${ic('close', 12, 12)}</div></div>
<div class="head"><div><button aria-label="Back">${ic('back')}</button><svg width="61" height="31"><defs><linearGradient id="g" x2="0" y2="1"><stop offset="0" stop-color="#00a4e6"/><stop offset="1" stop-color="#0a94dc"/></linearGradient></defs><path fill="url(#g)" d="M0 0h61L31 31H0z"/><text x="1" y="24" font-family="Liberation Sans" font-weight="700" font-size="21" fill="#fff" stroke="#fff" stroke-width=".8">SAP</text></svg></div><h1>Maintain Users</h1></div>
<div class="tools"><button aria-label="Enter">${ic('check')}</button><div class="combo"><input type="text" aria-label="Command">${ic('down', 13, 9)}</div><button class="q" aria-label="Save">${ic('save')}</button><button class="q" aria-label="Compare">${ic('scale')}</button><button>Cancel</button><button class="m">More${ic('down', 12, 8)}</button><div class="r"><button aria-label="New session">${ic('winstar')}</button><button aria-label="Shortcut">${ic('winlink')}</button><button>Exit</button></div></div>
<input class="field" type="text" value="saved" aria-label="Status" readonly>
<div class="tabs"><button>Roles</button><button>Profiles</button><button>Groups</button><button>Personalization</button><button>Lic. Data</button></div>
<div class="panel"><role-grid></role-grid></div>
<div class="split"><i></i></div>
<message-log></message-log>
<div class="status"><span>${ic('info')}</span>Control (amodal) search help could not be initialized</div>
<range-dialog></range-dialog>`);

define('right-monitor', `
:host{display:flex;flex-direction:column;position:relative;background:#000}
.task{display:flex;height:33px;margin-top:6px;background:linear-gradient(90deg,#213a41,#20363f 50%,#1b2a3d 80%,#2c3642);color:#fff;--cell:49px;overflow:hidden}
.task>button{width:48px;height:28px}
.task task-apps{margin-left:2px}
.cream{position:absolute;left:0;bottom:0;width:29px;height:26px;background:#fff5d0}
.clock{margin-left:auto;padding-right:4px;font-size:11px;line-height:18px;text-align:center}
.g{position:absolute;top:0;right:0;width:4px;height:26px;background:#0f0}`,
  `<sap-gui></sap-gui><div class="task"><button aria-label="Start">${ic('win', 16)}</button><button aria-label="Search">${ic('search', 16)}</button><button aria-label="Cortana">${ic('ring', 16)}</button><button aria-label="Task View">${ic('tasks', 16)}</button><task-apps size="24"></task-apps><div class="clock">10:19 PM<br>5/15/2021</div></div><span class="cream"></span><span class="g"></span>`);
</script>
</body>
</html>
